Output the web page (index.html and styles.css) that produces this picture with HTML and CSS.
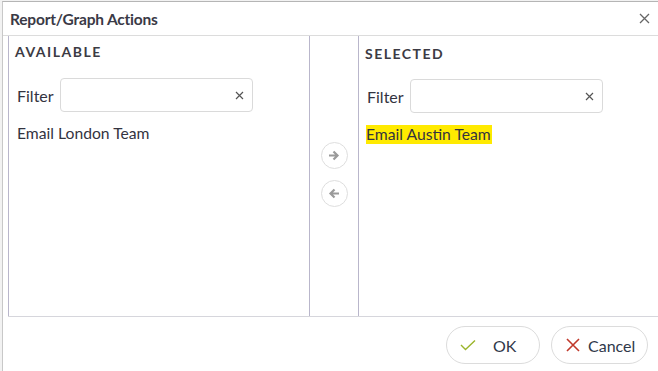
FILE: index.html
```html
<!DOCTYPE html>
<html lang="en">

<head>
    <meta charset="UTF-8">
    <meta name="viewport" content="width=device-width, initial-scale=1.0">
    <title>Report/Graph Actions</title>
    <link rel="stylesheet" href="styles.css">
</head>

<body>
    <div class="dialog">
        <!-- header -->
        <div class="dialog__head">
            <div class="dialog__title">Report/Graph Actions</div>
            <button class="dialog__close" aria-label="Close">
                <svg width="11" height="11" viewBox="0 0 11 11"><path d="M1 1L10 10M10 1L1 10" stroke="#666" stroke-width="1.3" fill="none"/></svg>
            </button>
        </div>

        <!-- picker -->
        <div class="dialog__body">
            <div class="picker">
                <div class="picker__panel picker__panel--left">
                    <h3 class="picker__heading">AVAILABLE</h3>
                    <div class="picker__filter">
                        <label>Filter</label>
                        <div class="picker__input">
                            <input type="text">
                            <svg width="9" height="9" viewBox="0 0 9 9"><path d="M1 1L8 8M8 1L1 8" stroke="#555" stroke-width="1.2" fill="none"/></svg>
                        </div>
                    </div>
                    <ul class="picker__list">
                        <li>Email London Team</li>
                    </ul>
                </div>

                <div class="picker__moves">
                    <button class="move__btn" aria-label="Add">
                        <svg width="12" height="11" viewBox="0 0 12 11"><path d="M1 5.5H9M5.5 1.5L9.5 5.5L5.5 9.5" stroke="#9a9a9a" stroke-width="2.2" fill="none"/></svg>
                    </button>
                    <button class="move__btn" aria-label="Remove">
                        <svg width="12" height="11" viewBox="0 0 12 11"><path d="M11 5.5H3M6.5 1.5L2.5 5.5L6.5 9.5" stroke="#9a9a9a" stroke-width="2.2" fill="none"/></svg>
                    </button>
                </div>

                <div class="picker__panel picker__panel--right">
                    <h3 class="picker__heading">SELECTED</h3>
                    <div class="picker__filter">
                        <label>Filter</label>
                        <div class="picker__input">
                            <input type="text">
                            <svg width="9" height="9" viewBox="0 0 9 9"><path d="M1 1L8 8M8 1L1 8" stroke="#555" stroke-width="1.2" fill="none"/></svg>
                        </div>
                    </div>
                    <ul class="picker__list">
                        <li><span class="mark">Email Austin Team</span></li>
                    </ul>
                </div>
            </div>
        </div>

        <!-- footer -->
        <div class="dialog__foot">
            <button class="btn btn--ok">
                <svg width="16" height="12" viewBox="0 0 16 12"><path d="M1 6L5.5 10.5L15 1.5" stroke="#9bb52c" stroke-width="1.4" fill="none"/></svg>
                OK
            </button>
            <button class="btn btn--cancel">
                <svg width="14" height="14" viewBox="0 0 14 14"><path d="M1 1L13 13M13 1L1 13" stroke="#c0392b" stroke-width="1.6" fill="none"/></svg>
                Cancel
            </button>
        </div>
    </div>
</body>

</html>
```

FILE: styles.css
```css
* {
    margin: 0;
    padding: 0;
    box-sizing: border-box;
}

body {
    background-color: #f2f2f2;
    height: 100vh;
    overflow: hidden;
    font-family: Lato, "Noto Sans", sans-serif;
    color: #33333f;
}

li {
    list-style: none;
}

button {
    font-family: inherit;
    background: none;
    border: none;
    cursor: pointer;
}

.dialog {
    margin: 1px 0 0 2px;
    height: 370px;
    background-color: #fff;
    border-top: 1px solid #b5b5b5;
    border-left: 1px solid #c8c8c8;
    display: flex;
    flex-direction: column;
}

.dialog__head {
    height: 34px;
    border-bottom: 1px solid #dcdcdc;
    display: flex;
    align-items: center;
    justify-content: space-between;
    padding: 0 6px 0 7px;
}

.dialog__title {
    font-size: 15.5px;
    font-weight: 700;
    color: #3a3a46;
    letter-spacing: -0.2px;
}

.dialog__close {
    width: 16px;
    height: 16px;
    display: flex;
    align-items: center;
    justify-content: center;
}

.dialog__body {
    padding-left: 5px;
}

.picker {
    display: grid;
    grid-template-columns: 301px 49px 1fr;
    height: 281px;
    border-bottom: 1px solid #d6d6dc;
}

.picker__panel {
    border-left: 1px solid #b9b6cb;
    padding: 7px 6px;
}

.picker__panel--right {
    padding-top: 9px;
}

.picker__heading {
    font-size: 14px;
    font-weight: 700;
    letter-spacing: 1.5px;
    color: #3c3b44;
}

.picker__filter {
    display: flex;
    align-items: center;
    margin-top: 18px;
}

.picker__panel--right .picker__filter {
    margin-top: 17px;
}

.picker__filter label {
    font-size: 16px;
    width: 45px;
    padding-left: 2px;
}

.picker__input {
    width: 193px;
    height: 34px;
    border: 1px solid #dadada;
    border-radius: 4px;
    display: flex;
    align-items: center;
    padding-right: 8px;
}

.picker__input input {
    flex: 1;
    min-width: 0;
    height: 100%;
    border: none;
    outline: none;
    background: none;
}

.picker__list {
    margin-top: 12px;
    font-size: 15.7px;
    padding-left: 2px;
}

.picker__panel--right .picker__list {
    padding-left: 1px;
    margin-top: 12px;
}

.mark {
    background-color: #ffea00;
    padding: 0 1px 1px 0;
}

.picker__moves {
    border-left: 1px solid #b9b6cb;
    display: flex;
    flex-direction: column;
    align-items: center;
    padding-top: 106px;
    gap: 11px;
}

.move__btn {
    width: 27px;
    height: 27px;
    border: 1px solid #dedede;
    border-radius: 50%;
    display: flex;
    align-items: center;
    justify-content: center;
}

.dialog__foot {
    display: flex;
    justify-content: flex-end;
    gap: 11px;
    padding: 9px 10px 0 0;
}

.btn {
    height: 38px;
    border: 1px solid #dcdcdc;
    border-radius: 19px;
    display: flex;
    align-items: center;
    font-size: 16px;
    color: #30384a;
}

.btn--ok {
    width: 94px;
    padding-left: 13px;
    gap: 17px;
}

.btn--cancel {
    width: 97px;
    padding-left: 14px;
    gap: 8px;
}
```
